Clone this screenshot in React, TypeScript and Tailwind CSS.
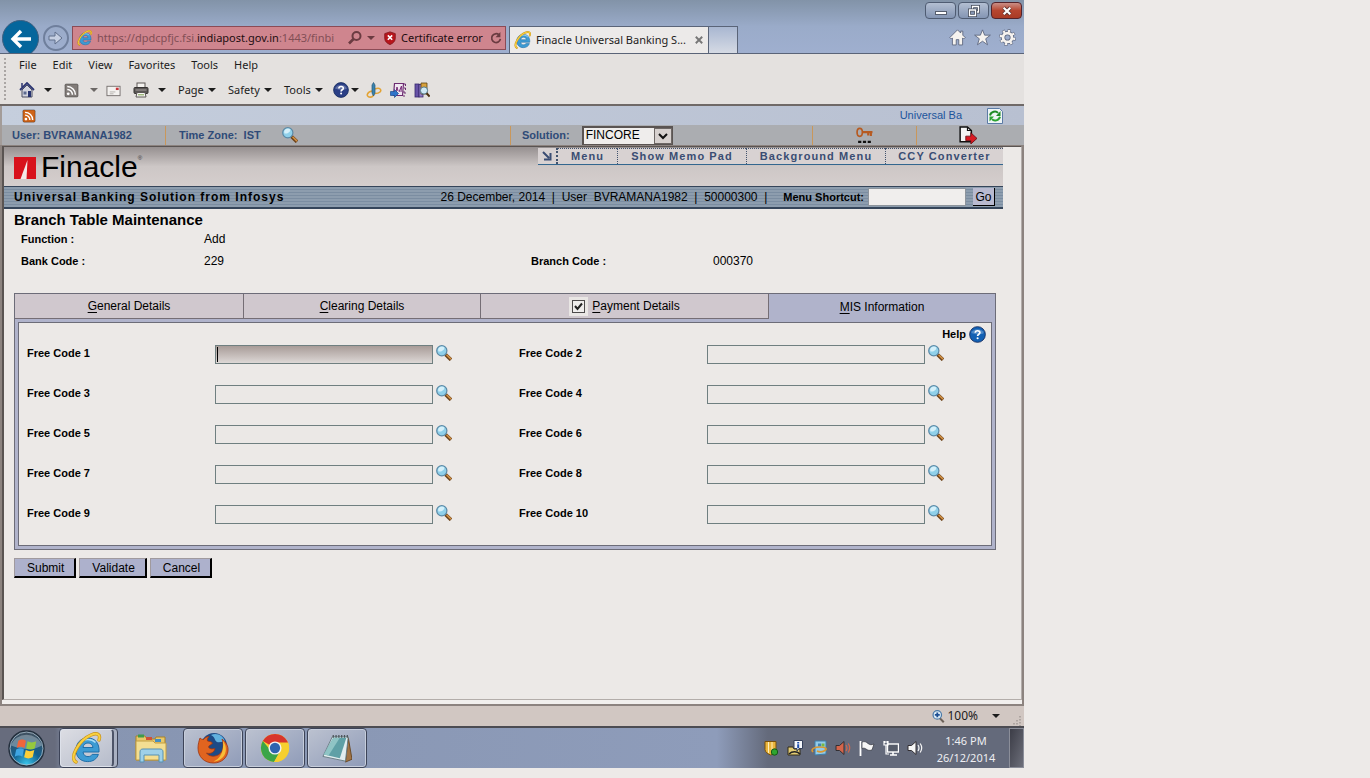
import { useState } from "react";
import type { ReactNode } from "react";

interface IconProps {
  className?: string;
}

const Svg = ({
  className = "",
  box = 16,
  children,
}: IconProps & { box?: number; children: ReactNode }) => (
  <svg
    className={`shrink-0 ${className}`}
    viewBox={`0 0 ${box} ${box}`}
    fill="none"
    aria-hidden="true"
  >
    {children}
  </svg>
);

/* ---------- Browser icons ---------- */

const IeLogo = ({ className }: IconProps) => (
  <Svg className={className} box={32}>
    <path
      d="M28 20H12c.4 3 2.200 4.600 5 4.600 2 0 3.400-.8 4.200-2.200h6.200C25.800 27 22 29.600 16.800 29.600 9.600 29.600 5 25 5 18S9.600 6 16.800 6C24 6 28.600 11 28 20zM22 15.500c-.4-2.800-2.200-4.500-5-4.500s-4.600 1.700-5 4.500z"
      fill="#3d9bd3"
      stroke="#1f6ea8"
      strokeWidth="1"
    />
    <path d="M8 13c2-4 5-5.500 9-5.500 3 0 5.500 1 7.500 3" stroke="#a9dcf5" strokeWidth="1.500" />
    <path
      d="M5 30C-2 26 8 8 20 3c6-2.500 10-1 8 5"
      stroke="#c9921a"
      strokeWidth="3.400"
      strokeLinecap="round"
    />
    <path
      d="M5 30C-2 26 8 8 20 3c6-2.500 10-1 8 5"
      stroke="#f8d03f"
      strokeWidth="2"
      strokeLinecap="round"
    />
  </Svg>
);

const SearchGlyph = ({ className }: IconProps) => (
  <Svg className={className}>
    <circle cx="9.500" cy="6" r="4" stroke="#6b3b41" strokeWidth="2" />
    <path d="M6.500 9L2 13.500" stroke="#6b3b41" strokeWidth="2.600" />
  </Svg>
);

const Shield = ({ className }: IconProps) => (
  <Svg className={className}>
    <path d="M8 1l6 2v5c0 4-2.500 6-6 7.500C4.500 14 2 12 2 8V3z" fill="#b8151b" stroke="#86161b" />
    <path d="M5.500 5l5 5M10.500 5l-5 5" stroke="#fff" strokeWidth="1.800" />
  </Svg>
);

const Refresh = ({ className }: IconProps) => (
  <Svg className={className}>
    <path d="M11.500 4.500A5 5 0 1 0 13 9" stroke="#6b3b41" strokeWidth="2" />
    <path d="M13 1v6H7.500z" fill="#6b3b41" />
  </Svg>
);

const Caret = ({ className = "text-[#1c1c1c]" }: IconProps) => (
  <svg className={`h-1 w-2 shrink-0 ${className}`} viewBox="0 0 8 4" aria-hidden="true">
    <path d="M0 0h8L4 4z" fill="currentColor" />
  </svg>
);

const House = ({ className }: IconProps) => (
  <Svg className={className}>
    <path d="M3 8v7h10V8L8 3z" fill="#d4d6e0" stroke="#4b4f63" />
    <path d="M1 8l7-7 7 7" stroke="#2c3572" strokeWidth="1.800" />
    <path d="M3 1v4" stroke="#2c3572" strokeWidth="1.500" />
    <rect x="9" y="9" width="3" height="6" fill="#27336f" />
    <rect x="4.500" y="9.500" width="3" height="3" fill="#5c6a8f" />
  </Svg>
);

const Rss = ({ className, tone }: IconProps & { tone: string }) => (
  <Svg className={className}>
    <rect x="1" y="1" width="14" height="14" rx="1.500" fill={tone} stroke="#00000055" />
    <circle cx="4.500" cy="11.500" r="1.500" fill="#fff" />
    <path d="M3.500 7a5.500 5.500 0 0 1 5.500 5.500M3.500 3.800A8.700 8.700 0 0 1 12.200 12.500" stroke="#fff" strokeWidth="1.600" />
  </Svg>
);

const Mail = ({ className }: IconProps) => (
  <Svg className={className}>
    <rect x="1" y="3.500" width="14" height="10" fill="#f3f1ef" stroke="#77716f" />
    <rect x="10.500" y="5" width="3" height="2.500" fill="#c8353a" />
    <path d="M4 9.500h6M4 11.500h4" stroke="#b5b1ae" />
  </Svg>
);

const Printer = ({ className }: IconProps) => (
  <Svg className={className}>
    <rect x="4" y="1" width="8" height="6" fill="#f5f3f0" stroke="#5c5856" />
    <rect x="1" y="5.500" width="14" height="6" rx="1" fill="#5a5655" stroke="#373433" />
    <path d="M2.500 8h11" stroke="#a7a2a0" />
    <path d="M4 10.500h8l1 4.500H3z" fill="#f7f6f3" stroke="#5c5856" />
    <path d="M5 12.800h6" stroke="#7aa04c" />
  </Svg>
);

const HelpBall = ({ className, tone }: IconProps & { tone: string }) => (
  <Svg className={className}>
    <circle cx="8" cy="8" r="7.400" fill={tone} stroke="#13295c" strokeWidth=".8" />
    <path d="M2 6.500a6.500 5.500 0 0 1 12 0C11 8.500 6 8 2 6.500z" fill="#fff" opacity=".25" />
    <path d="M5.900 6.400C5.900 3.800 10.300 3.900 10.300 6.200c0 1.600-2.200 1.500-2.200 3.200" stroke="#fff" strokeWidth="1.600" />
    <circle cx="8.100" cy="11.500" r="1" fill="#fff" />
  </Svg>
);

const PenRing = ({ className }: IconProps) => (
  <Svg className={className}>
    <path d="M6 9c-5 1-6 5-3 6 3 .5 5-1 5-4M9 7c5-2 7 1 5 3-1 1-3 1.500-5 1.500" stroke="#e3a334" strokeWidth="1.600" />
    <path d="M6 3l1.500-2.500L9 3v8l-1.500 3L6 11z" fill="#3a83ad" stroke="#265a7c" strokeWidth=".7" />
  </Svg>
);

const NoteClip = ({ className }: IconProps) => (
  <Svg className={className}>
    <path d="M4.500 1.500h9l-1 12h-9z" fill="#f1e8f2" stroke="#6d2c72" strokeWidth="1.200" />
    <path d="M6 10l1-5 1 4M9 10l2.500-6-.5 6" stroke="#762a77" strokeWidth="1" />
    <path d="M14 2h1.500v2M14 6h1.500v2M13 10h2v2M13 14h2" stroke="#6d2c72" />
    <path d="M.5 9.500h4V7.500l4 4-4 4v-2h-4z" fill="#2f74c9" stroke="#1b4a8c" strokeWidth=".7" />
  </Svg>
);

const Research = ({ className }: IconProps) => (
  <Svg className={className}>
    <rect x="1" y="2" width="4" height="13" fill="#6752a6" stroke="#38286d" strokeWidth=".8" />
    <rect x="5" y="2.500" width="4" height="12.500" fill="#8f7ac6" stroke="#38286d" strokeWidth=".8" />
    <path d="M7 1h6v11H7z" fill="#d9a13b" stroke="#5c4414" strokeWidth=".8" />
    <circle cx="10" cy="8.500" r="3.600" fill="#cfe9f5" stroke="#547b8f" />
    <path d="M12.600 11.300l3 3.200" stroke="#4a3212" strokeWidth="2" />
  </Svg>
);

const NavHome = ({ className }: IconProps) => (
  <Svg className={className}>
    <path d="M8 .8L.8 8l1.400 1.400 1-1V15h3.600v-5h2.400v5h3.600V8.400l1 1L15.200 8l-2.200-2.200V2h-2v1.800z" fill="#f6f3ef" stroke="#57617a" strokeWidth=".8" />
  </Svg>
);

const NavStar = ({ className }: IconProps) => (
  <Svg className={className}>
    <path d="M8 .8l2 5h5.400L11 9.200l1.700 5.600L8 11.500l-4.700 3.300L5 9.200.6 5.800H6z" fill="#f6f3ef" stroke="#57617a" strokeWidth=".8" />
  </Svg>
);

const NavGear = ({ className }: IconProps) => (
  <Svg className={className}>
    <circle cx="8" cy="8" r="6.200" stroke="#57617a" strokeWidth="3.400" strokeDasharray="2.600 2.270" />
    <circle cx="8" cy="8" r="4.200" stroke="#57617a" strokeWidth="4" />
    <circle cx="8" cy="8" r="6.200" stroke="#f6f3ef" strokeWidth="2.400" strokeDasharray="2 2.870" strokeDashoffset="-.3" />
    <circle cx="8" cy="8" r="4.200" stroke="#f6f3ef" strokeWidth="2.600" />
  </Svg>
);

/* ---------- Finacle icons ---------- */

const Lens = ({ className }: IconProps) => (
  <Svg className={className}>
    <path d="M9.500 9.500l5.500 5.300" stroke="#6e431b" strokeWidth="3.600" />
    <path d="M10.500 9.800l4.500 4.300" stroke="#d49344" strokeWidth="1.500" />
    <circle cx="5.800" cy="5.800" r="5.100" fill="#8fd0ea" stroke="#5b89a6" strokeWidth="1.200" />
    <path d="M2.500 6.500a3.600 3.600 0 0 1 6-3.800C8 5.500 5 7 2.500 6.500z" fill="#d5f0fa" />
  </Svg>
);

const ReloadPage = ({ className }: IconProps) => (
  <Svg className={className}>
    <path d="M.5.500h12l3 3v12H.5z" fill="#eef4f6" stroke="#5b7ba5" />
    <path d="M3 7.500C4 3.500 9 2.500 11 5" stroke="#1e8b25" strokeWidth="2" />
    <path d="M13.500 3v5H9z" fill="#1e8b25" />
    <path d="M13 8.800c-1 4-6 4.700-8 2.400" stroke="#2ca332" strokeWidth="2" />
    <path d="M2.500 13.500v-5H7z" fill="#2ca332" />
  </Svg>
);

const Key = ({ className }: IconProps) => (
  <Svg className={className}>
    <ellipse cx="3.500" cy="5" rx="2.500" ry="3.800" stroke="#b65a21" strokeWidth="1.600" />
    <path d="M6 4.800h9.500M11.500 5v3M14 5v3.500" stroke="#b65a21" strokeWidth="2" />
    <path d="M2 13h3v2H2zM6.500 13h3v2h-3zM11 13h3v2h-3z" fill="#111" />
  </Svg>
);

const ExitDoor = ({ className }: IconProps) => (
  <Svg className={className}>
    <path d="M1 .8h6.500L11 4v10H1z" fill="#f5f5f5" stroke="#111" strokeWidth="1.300" />
    <path d="M7.500.8V4H11" stroke="#111" />
    <path d="M6 9h4.500V6L16 11l-5.500 5v-3H6z" fill="#d91a23" stroke="#5d0c10" strokeWidth=".7" />
  </Svg>
);

const FinacleMark = ({ className }: IconProps) => (
  <Svg className={className} box={22}>
    <path d="M0 0h22v22H0z" fill="#d8121c" />
    <path d="M6.500 22L13.500 3l-1 19z" fill="#f3e9e8" />
  </Svg>
);

/* ---------- Taskbar icons ---------- */

const StartOrb = ({ className }: IconProps) => (
  <Svg className={className} box={36}>
    <defs>
      <radialGradient id="orb" cx=".5" cy=".95" r=".9">
        <stop offset="0" stopColor="#39c6ec" />
        <stop offset=".45" stopColor="#12608f" />
        <stop offset="1" stopColor="#40505f" />
      </radialGradient>
    </defs>
    <circle cx="18" cy="18" r="17" fill="url(#orb)" stroke="#232f3d" strokeWidth="1.500" />
    <circle cx="18" cy="18" r="16" stroke="#a7bccb" strokeWidth=".8" />
    <path d="M3 15a15.500 14 0 0 1 30 0c-8 5-20 4-30 0z" fill="#fff" opacity=".3" />
    <path d="M10 10.500c3-2 5-1.500 7.500 0L16 17.500c-3-1.500-5-1.500-7.500 0z" fill="#f0653a" />
    <path d="M19 11c3 1.500 5 1.500 8.500 0L26 18c-3 1.500-5.500 1.300-8.300 0z" fill="#95c83e" />
    <path d="M8 19c3-1.600 5-1.500 7.500 0L14 26c-2.500-1.500-4.700-1.500-7.500 0z" fill="#3fa5e2" />
    <path d="M17.300 19.500c3 1.500 5 1.500 8.300 0L24 26.500c-3 1.500-5.500 1.500-8.300 0z" fill="#fbcf38" />
  </Svg>
);

const Explorer = ({ className }: IconProps) => (
  <Svg className={className} box={32}>
    <path d="M1 4h9l2 3h8l1-2h9v23H1z" fill="#e8c86a" stroke="#a8822b" />
    <path d="M3 2.500h6v3H3z" fill="#3f9b4b" />
    <path d="M11 5h6v3h-6z" fill="#cf5037" />
    <path d="M20 7h6v3h-6z" fill="#418ec4" />
    <path d="M1 9h17l2 2h11v17H1z" fill="#f3de92" stroke="#c29d43" />
    <path d="M5 30V20c0-2 1-3 3-3h17c2 0 3 1 3 3v10h-4v-7H9v7z" fill="#9ed0e8" stroke="#5791b3" />
  </Svg>
);

const Firefox = ({ className }: IconProps) => (
  <Svg className={className} box={32}>
    <circle cx="17" cy="14" r="13" fill="#1d4a86" />
    <path d="M14 3c6-3 13 1 14 7-3-1-5 1-8 0-3-2-1-4-6-7z" fill="#62b1df" />
    <path d="M3 6c1 1 2 1.500 3.500 1.500C8 5.500 10 4.500 12 4.500 10.500 6 10 7.500 10.500 9c2 .5 4 .5 5 2-1 2-3.500 2-4 4 1 2.500 4.500 2 6.500 1.500-1 5-6 5.500-8.500 4.500C13 26 22 25 25 19c2-4 1-9 0-12 4 3 6.500 7 6 12-.8 7-6.500 12-14.500 12C7 31 1 24.500 1 16 1 12 2 9 3 6z" fill="#e0641f" stroke="#9d3410" strokeWidth=".8" />
    <path d="M26 9c3 4 4 9 1.500 14-2.500 4-6.500 6.500-11 6.500C23 27 27 20 26 9z" fill="#f8bd37" />
  </Svg>
);

const Chrome = ({ className }: IconProps) => (
  <Svg className={className} box={32}>
    <circle cx="16" cy="16" r="15" fill="#f6cf2f" />
    <path d="M16 16L3 8.500A15 15 0 0 1 29 8.500L30 11H16z" fill="#d8352c" />
    <path d="M3 8.500A15 15 0 0 0 15 31l7-12-6-3-6 1z" fill="#3ba548" />
    <path d="M29.800 10H16v6l5 4-6 11A15 15 0 0 0 29.800 10z" fill="#f6cf2f" />
    <circle cx="16" cy="16" r="7" fill="#f4f4f4" />
    <circle cx="16" cy="16" r="5.500" fill="#2e64b0" />
  </Svg>
);

const Notepad = ({ className }: IconProps) => (
  <Svg className={className} box={32}>
    <path d="M28 5l4 23-7 3z" fill="#a27445" stroke="#684723" />
    <path d="M11 4h17l-3 26L1 25z" fill="#e2edef" stroke="#667b83" />
    <path d="M12 5h14l-7 22L2 23z" fill="#5fa0a6" />
    <path d="M12 5h7L7 24l-5-1z" fill="#8fc4c5" />
    <path d="M12 2v3M15 2v3M18 2v3M21 2v3M24 2v3M27 2v3" stroke="#4c5357" strokeWidth="1.300" />
  </Svg>
);

const TrayShield = ({ className }: IconProps) => (
  <Svg className={className}>
    <path d="M2 1.500h11v8c0 3-3 5-5.500 5.500C5 14 2 12 2 9.500z" fill="#e9b53d" stroke="#79510d" />
    <path d="M5.500 2v11M9 2v8" stroke="#fff0bd" />
    <circle cx="11.500" cy="12" r="3.200" fill="#2fa52f" stroke="#155916" />
  </Svg>
);

const TrayInfo = ({ className }: IconProps) => (
  <Svg className={className}>
    <path d="M1 7h5l1 2h6v6H1z" fill="#e3cb73" stroke="#302a19" />
    <path d="M2 14c3-3 8-3 11 0" stroke="#222" strokeWidth="1.600" />
    <path d="M7 .5h8.500v8H12l-2 2.500V8.500H7z" fill="#f5f7fb" stroke="#34405b" />
    <path d="M11.200 2v1.500M11.200 4.300V8" stroke="#1e4fae" strokeWidth="2" />
  </Svg>
);

const TrayUpdate = ({ className }: IconProps) => (
  <Svg className={className}>
    <path d="M4 1h11v13l-11 1z" fill="#93cbe8" stroke="#3f7fa9" />
    <path d="M7 3.500h3v3H7z" fill="#3f86b8" />
    <path d="M10.500 3.500h3v3h-3z" fill="#78b843" />
    <path d="M2 12C-1 9 4 7 9 7c6 0 8 2 4 4-2 1-5 1-7 0" stroke="#d99832" strokeWidth="1.700" />
  </Svg>
);

const Speaker = ({ className, tone }: IconProps & { tone: string }) => (
  <Svg className={className}>
    <path d="M1 5.500h3.500L9 1.500v13l-4.500-4H1z" fill={tone} stroke="#332f33" />
    <path d="M11 5c1.300 2 1.300 4 0 6M13.200 3.500c2 3 2 6 0 9" stroke={tone} strokeWidth="1.200" />
  </Svg>
);

const Flag = ({ className }: IconProps) => (
  <Svg className={className}>
    <path d="M1.500 1v15" stroke="#fff" strokeWidth="1.800" />
    <path d="M3 2c3-1 4 0 6 1.500 2 1.500 3.500 1.500 6 .5l-2 6c-3 1-4.500 0-6-1C5.500 8 4.500 8 3 8.500z" fill="#f7f7f7" stroke="#31343d" strokeWidth=".7" />
  </Svg>
);

const Network = ({ className }: IconProps) => (
  <Svg className={className}>
    <rect x="4.500" y="4" width="11" height="8" fill="#565c6a" stroke="#fff" strokeWidth="1.400" />
    <path d="M7 15h7M10 12v3" stroke="#fff" strokeWidth="1.600" />
    <path d="M1 1v4h4V1M3 5v9h3M2 1v2M4 1v2" stroke="#fff" strokeWidth="1.200" />
  </Svg>
);

const ZoomIn = ({ className }: IconProps) => (
  <Svg className={className}>
    <path d="M9.500 10l5 5" stroke="#6c6158" strokeWidth="2.600" />
    <circle cx="6.500" cy="6" r="5.200" fill="#dcebf5" stroke="#4a7aa8" strokeWidth="1.500" />
    <path d="M6.500 3v6M3.500 6h6" stroke="#1c4f93" strokeWidth="2.200" />
  </Svg>
);

/* ---------- Sections ---------- */

const menus = ["File", "Edit", "View", "Favorites", "Tools", "Help"];

const TitleBar = () => (
  <header className="flex h-[54px] overflow-hidden border-b border-[#5a6478] bg-linear-to-b from-[#8293a8] via-[#9aabc9] to-[#9fafcf] text-[11px]">
    <div className="flex items-start gap-1 pt-5 pl-0.5">
      <button
        aria-label="Back"
        className="grid size-[37px] shrink-0 place-items-center rounded-full border border-[#3f5f80] bg-[#05669c]"
      >
        <Svg className="size-[22px]" box={22}>
          <path d="M21 11H4M11 3L3 11l8 8" stroke="#fff" strokeWidth="3.400" />
        </Svg>
      </button>
      <button
        aria-label="Forward"
        className="mt-[5px] grid size-[26px] shrink-0 place-items-center rounded-full border-2 border-[#6f7f9c]"
      >
        <Svg className="size-4">
          <path d="M1 6h6V2l7 6-7 6v-4H1z" fill="#c5cfe2" stroke="#61708c" />
        </Svg>
      </button>
    </div>
    <div className="mt-[26px] ml-[3px] flex h-6 w-[434px] items-center border border-[#8b4b56] bg-[#cf858e] pl-1">
      <IeLogo className="size-4" />
      {/* the host name is darker than the rest of the address */}
      <div
        role="textbox"
        aria-label="Address"
        tabIndex={0}
        className="ml-1 w-[246px] whitespace-nowrap text-[#824f56]"
      >
        https://dpdcpfjc.fsi.<span className="text-[#1d0d10]">indiapost.gov.in</span>:1443/finbi
      </div>
      <button aria-label="Search" className="ml-1 flex items-center gap-1">
        <SearchGlyph className="size-4" />
        <Caret className="text-[#6b3b41]" />
      </button>
      <Shield className="ml-2 size-[14px]" />
      <button className="ml-1 whitespace-nowrap text-[#1d0d10]">Certificate error</button>
      <button aria-label="Refresh" className="ml-1.5">
        <Refresh className="size-[14px]" />
      </button>
    </div>
    <div className="mt-[26px] ml-[3px] flex w-[200px] items-center border border-b-0 border-[#5a6478] bg-[#eceae9] pl-1">
      <IeLogo className="size-[18px]" />
      <span className="ml-1 whitespace-nowrap text-[#1c1c1c]">Finacle Universal Banking S...</span>
      <button aria-label="Close tab" className="ml-auto pr-[5px]">
        <Svg className="size-2" box={10}>
          <path d="M1 1l8 8M9 1L1 9" stroke="#777" strokeWidth="2.400" />
        </Svg>
      </button>
    </div>
    <button aria-label="New tab" className="mt-[26px] w-[29px] border border-b-0 border-l-0 border-[#5a6478] bg-linear-to-b from-[#a9b7d1] to-[#d5dae4]" />
    <div className="ml-auto flex flex-col items-end pt-0.5 pr-0.5">
      <div className="flex gap-0.5">
        <button aria-label="Minimize" className="grid h-[17px] w-[31px] place-items-center rounded-sm border border-[#4f5c72] bg-linear-to-b from-[#b3bfd2] to-[#8495b3] pt-1">
          <span className="h-1 w-3 border border-[#555d6d] bg-white" />
        </button>
        <button aria-label="Restore" className="grid h-[17px] w-[31px] place-items-center rounded-sm border border-[#4f5c72] bg-linear-to-b from-[#b3bfd2] to-[#8495b3]">
          <Svg className="size-3" box={12}>
            <path d="M4.500 1.500h6v5.500h-6z" stroke="#454c5c" strokeWidth="3" />
            <path d="M4.500 1.500h6v5.500h-6z" stroke="#fff" strokeWidth="1.300" />
            <path d="M1.500 5h6v5.500h-6z" fill="#8495b3" stroke="#454c5c" strokeWidth="3" />
            <path d="M1.500 5h6v5.500h-6z" stroke="#fff" strokeWidth="1.300" />
          </Svg>
        </button>
        <button aria-label="Close" className="grid h-[17px] w-[31px] place-items-center rounded-sm border border-[#54232a] bg-linear-to-b from-[#c98e86] via-[#b6452f] to-[#a93b25]">
          <Svg className="h-[10px] w-3" box={12}>
            <path d="M2 2l8 8M10 2l-8 8" stroke="#5b3432" strokeWidth="4.400" />
            <path d="M2 2l8 8M10 2l-8 8" stroke="#fff" strokeWidth="2.600" />
          </Svg>
        </button>
      </div>
      <div className="mt-2.5 flex gap-2 pr-1.5">
        <button aria-label="Home">
          <NavHome className="size-[17px]" />
        </button>
        <button aria-label="Favorites">
          <NavStar className="size-[17px]" />
        </button>
        <button aria-label="Settings">
          <NavGear className="size-[17px]" />
        </button>
      </div>
    </div>
  </header>
);

const CommandBar = () => (
  <div className="flex h-[52px] border-b-2 border-[#6f6967] bg-[#e4e1df] pl-1 text-[11px] text-[#1c1c1c]">
    <div className="my-1 w-0.5 border-l-2 border-dotted border-[#aaa6a4]" />
    <div className="pl-[13px]">
      <nav className="flex h-[23px] items-center gap-4">
        {menus.map((name) => (
          <button key={name}>{name}</button>
        ))}
      </nav>
      <div className="flex h-[26px] items-center">
        <button aria-label="Home page" className="flex w-[45px] items-center gap-[9px]">
          <House className="size-4" />
          <Caret />
        </button>
        <button aria-label="Feeds" className="flex w-[42px] items-center gap-[11px]">
          <Rss className="size-[15px]" tone="#827c79" />
          <Caret className="text-[#6c6866]" />
        </button>
        <button aria-label="Read mail" className="w-[27px]">
          <Mail className="size-[15px]" />
        </button>
        <button aria-label="Print" className="flex w-[45px] items-center gap-[9px]">
          <Printer className="size-4" />
          <Caret />
        </button>
        <button className="flex w-[50px] items-center gap-1">
          Page <Caret />
        </button>
        <button className="flex w-14 items-center gap-1">
          Safety <Caret />
        </button>
        <button className="flex w-[49px] items-center gap-1">
          Tools <Caret />
        </button>
        <button aria-label="Help" className="flex w-[33px] items-center gap-0.5">
          <HelpBall className="size-4" tone="#2b3f86" />
          <Caret />
        </button>
        <div className="flex gap-2">
          <button aria-label="Edit page">
            <PenRing className="size-4" />
          </button>
          <button aria-label="Send to notes">
            <NoteClip className="size-4" />
          </button>
          <button aria-label="Research">
            <Research className="size-4" />
          </button>
        </div>
      </div>
    </div>
  </div>
);

const SessionBar = () => (
  <div className="border-l-2 border-[#a39c99] font-['Liberation_Sans',Arial,sans-serif] text-[11px] text-[#2f4b78]">
    <div className="flex h-[19px] items-center justify-between bg-linear-to-r from-[#c5cedd] to-[#b8c0d1] pr-[21px] pl-5">
      <Rss className="size-[14px]" tone="#cf6419" />
      <div className="flex items-center gap-[25px] text-[#1c549c]">
        <span>Universal Ba</span>
        <button aria-label="Reload">
          <ReloadPage className="size-4" />
        </button>
      </div>
    </div>
    <div className="flex h-5 items-center bg-[#abadb1] font-bold">
      <div className="w-[163px] pl-2.5">User: BVRAMANA1982</div>
      <div className="flex h-[19px] w-[345px] items-center border-l border-[#c9975b] pl-[13px]">
        <span className="whitespace-pre">Time Zone:  IST</span>
        <button aria-label="Change time zone" className="ml-[21px]">
          <Lens className="size-4" />
        </button>
      </div>
      <div className="flex h-[19px] w-[302px] items-center border-l border-[#c9975b] pl-[11px]">
        <label htmlFor="solution">Solution:</label>
        <div className="relative ml-3">
          <select
            id="solution"
            className="block h-[19px] w-[91px] appearance-none border-2 border-r-1 border-b-1 border-[#5a5452] bg-[#efedec] pl-0.5 text-[12px] leading-[15px] font-normal text-black"
          >
            <option>FINCORE</option>
          </select>
          <span className="pointer-events-none absolute top-0.5 right-px grid h-4 w-[18px] place-items-center border border-[#6d6765] bg-[#d7d1cf]">
            <Svg className="size-3" box={12}>
              <path d="M2 4l4 4 4-4" stroke="#111" strokeWidth="2" />
            </Svg>
          </span>
        </div>
      </div>
      <div className="flex h-[19px] w-[104px] items-center justify-center border-l border-[#c9975b]">
        <button aria-label="Change password">
          <Key className="size-[17px]" />
        </button>
      </div>
      <div className="flex h-[19px] flex-1 items-center border-l border-[#c9975b] pl-[42px]">
        <button aria-label="Log out">
          <ExitDoor className="size-[18px]" />
        </button>
      </div>
    </div>
  </div>
);

const Banner = () => (
  <div className="mr-[18px]">
    <div className="flex h-[39px] justify-between bg-linear-to-b from-[#969090] via-[#cdc7c6] to-[#d5cecd]">
      <div className="flex items-center pl-2.5">
        <FinacleMark className="mt-0.5 size-[22px]" />
        <span className="ml-[5px] text-[30px] leading-[36px] text-black">Finacle</span>
        <span className="mb-4 text-[6px] text-[#333]">®</span>
      </div>
      <nav className="mt-px flex h-[17px] items-center border-b border-[#33678f] bg-[#d8d2d2] text-[11px] font-bold tracking-widest text-[#3a4d73]">
        <button aria-label="Collapse" className="grid h-4 w-[18px] place-items-center">
          <Svg className="size-3" box={12}>
            <path d="M2 2l6 6M9.500 3v6.500H3" stroke="#3a4d73" strokeWidth="2" />
          </Svg>
        </button>
        <a href="#menu" className="w-[61px] border-t border-l-2 border-dotted border-[#42536d] text-center leading-[15px]">
          Menu
        </a>
        <a href="#memo" className="w-[129px] border-t border-l border-dotted border-[#42536d] text-center leading-[15px]">
          Show Memo Pad
        </a>
        <a href="#background" className="w-[139px] border-t border-l border-dotted border-[#42536d] text-center leading-[15px]">
          Background Menu
        </a>
        <a href="#converter" className="w-[118px] border-t border-l border-dotted border-[#42536d] text-center leading-[15px]">
          CCY Converter
        </a>
      </nav>
    </div>
    <div className="flex h-[23px] items-center border-t border-b-2 border-[#35455a] bg-[repeating-linear-gradient(#8d9dae_0_2px,#7b8da1_2px_3px)] pr-2 pl-2.5 text-[12px] text-black">
      <span className="font-bold tracking-[1px]">Universal Banking Solution from Infosys</span>
      <div className="ml-auto flex items-center">
        <span className="whitespace-pre">26 December, 2014  |  User  BVRAMANA1982  |  50000300  |</span>
        <label htmlFor="shortcut" className="ml-4 text-[11px] font-bold">
          Menu Shortcut:
        </label>
        <input id="shortcut" className="ml-1 h-[18px] w-[98px] border border-[#8d949c] bg-[#f0eeed] px-1" />
        <button className="ml-[7px] h-[18px] w-[22px] border-r border-b border-black bg-[#b9bad0] leading-4">Go</button>
      </div>
    </div>
  </div>
);

const tabs = ["General Details", "Clearing Details", "Payment Details", "MIS Information"];

const Tabs = () => {
  const [active, setActive] = useState(3);
  const [payment, setPayment] = useState(true);

  return (
    <div className="grid grid-cols-[229fr_237fr_288fr_226fr] text-[12px]">
      {tabs.map((name, index) => (
        <div
          key={name}
          className={`flex h-[25px] items-center justify-center gap-1 ${
            active === index
              ? "bg-[#b0b3cb]"
              : "border-r border-b border-[#756e75] bg-[#d0c8ce]"
          }`}
        >
          {index === 2 && (
            <span className="grid size-[19px] place-items-center bg-[#e9e6e4]">
              <input
                type="checkbox"
                aria-label="Payment Details enabled"
                checked={payment}
                onChange={() => setPayment(!payment)}
                className="col-start-1 row-start-1 size-[13px] appearance-none border border-[#4c4a4a] bg-[#efedec]"
              />
              {payment && (
                <Svg className="pointer-events-none col-start-1 row-start-1 size-[11px]" box={11}>
                  <path d="M2 5l2.500 3L9 2.500" stroke="#222" strokeWidth="2" />
                </Svg>
              )}
            </span>
          )}
          <button onClick={() => setActive(index)}>
            <span className="underline underline-offset-2">{name[0]}</span>
            {name.slice(1)}
          </button>
        </div>
      ))}
    </div>
  );
};

const FreeCode = ({ number }: { number: number }) => (
  <div className="flex h-10 items-start">
    <label htmlFor={`code-${number}`} className="w-[188px] text-[11px] leading-4 font-bold">
      Free Code {number}
    </label>
    <div className="relative">
      <input
        id={`code-${number}`}
        className={`block h-[19px] w-[218px] border border-[#6f7f80] px-1 text-[12px] ${
          number === 1 ? "bg-linear-to-b from-[#a89c98] to-[#ddd8d6]" : "bg-[#ebe8e6]"
        }`}
      />
      {number === 1 && <span className="absolute top-0.5 left-0.5 h-[15px] w-px bg-black" />}
    </div>
    <button aria-label={`Look up Free Code ${number}`} className="ml-[3px]">
      <Lens className="size-4" />
    </button>
  </div>
);

const BranchForm = () => (
  <main className="px-2.5 pb-[121px] text-black">
    <h1 className="pt-0.5 text-[15px] leading-[17px] font-bold">Branch Table Maintenance</h1>
    <dl className="grid grid-cols-[183px_327px_182px_1fr] pl-[7px] text-[12px] leading-[22px]">
      <dt className="text-[11px] font-bold">Function :</dt>
      <dd className="col-span-3">Add</dd>
      <dt className="text-[11px] font-bold">Bank Code :</dt>
      <dd>229</dd>
      <dt className="text-[11px] font-bold">Branch Code :</dt>
      <dd>000370</dd>
    </dl>
    <div className="mt-[21px] mr-[15px] border border-[#6c6c78] bg-[#b0b3cb]">
      <Tabs />
      <div className="m-[3px] border border-[#6c6c78] bg-[#ece9e7]">
        <div className="flex h-[22px] items-center justify-end pr-[5px] text-[11px]">
          <a href="#help" className="flex items-center gap-[3px] font-bold">
            Help
            <HelpBall className="size-[17px]" tone="#1260b4" />
          </a>
        </div>
        <div className="grid grid-cols-2 gap-x-5 pl-2">
          {Array.from({ length: 10 }, (_, i) => (
            <FreeCode key={i} number={i + 1} />
          ))}
        </div>
      </div>
    </div>
    <div className="mt-2 flex gap-[3px] text-[12px]">
      {["Submit", "Validate", "Cancel"].map((name) => (
        <button
          key={name}
          className="h-5 border border-r-2 border-b-2 border-[#a09a9e] border-r-black border-b-black bg-[#adb1cc] pr-[10px] pl-3 leading-4"
        >
          {name}
        </button>
      ))}
    </div>
  </main>
);

const StatusBar = () => (
  <div className="flex h-[22px] items-center justify-end border-b-2 border-[#4c4c52] bg-[#d1c7c2] pr-0.5 text-[12px] text-[#1c1c1c]">
    <button className="flex items-center gap-0.5">
      <ZoomIn className="size-[13px]" />
      100%
      <Caret className="ml-3 text-[#1c1c1c]" />
    </button>
    <Svg className="ml-3 size-[10px] self-end" box={10}>
      <path d="M8 0v10M5 4v6M2 7v3" stroke="#a39a96" strokeWidth="1.500" strokeDasharray="1.500 1.500" />
    </Svg>
  </div>
);

const pinned = [
  { name: "Firefox", icon: <Firefox className="size-8" /> },
  { name: "Chrome", icon: <Chrome className="size-[30px]" /> },
  { name: "Notepad", icon: <Notepad className="size-[30px]" /> },
];

const Taskbar = () => (
  <footer className="flex h-10 items-center bg-[linear-gradient(90deg,#676c7d_0_55px,#8795b1_70px,#8e9cba_70%,#646a7b_75%)]">
    <button aria-label="Start" className="mr-[14px] ml-2">
      <StartOrb className="size-[37px]" />
    </button>
    <div className="flex h-10 w-[59px] rounded-sm border border-[#3d4458] bg-[#a9b0c1]">
      <button aria-label="Internet Explorer" className="grid w-[54px] place-items-center rounded-sm border border-r-2 border-[#dde1ea] border-r-[#4d5468] bg-linear-to-br from-[#dcdde3] to-[#b6bccb]">
        <IeLogo className="size-8" />
      </button>
    </div>
    <button aria-label="Windows Explorer" className="grid w-[65px] place-items-center">
      <Explorer className="size-8" />
    </button>
    <div className="flex gap-0.5">
      {pinned.map((app) => (
        <button
          key={app.name}
          aria-label={app.name}
          className="grid h-10 w-[60px] place-items-center rounded-sm border border-[#3d4458] bg-linear-to-br from-[#bcc2d0] to-[#8f9bb8] inset-ring inset-ring-[#c6cddb]"
        >
          {app.icon}
        </button>
      ))}
    </div>
    <div className="ml-auto flex items-center gap-2">
      <TrayShield className="size-4" />
      <TrayInfo className="size-4" />
      <TrayUpdate className="size-4" />
      <Speaker className="size-4" tone="#d4654b" />
      <Flag className="size-4" />
      <Network className="size-4" />
      <Speaker className="size-4" tone="#f7f7f7" />
    </div>
    <div className="w-[86px] pt-0.5 text-center text-[11px] leading-[17px] text-[#eeeef2]">
      <div>1:46 PM</div>
      <div>26/12/2014</div>
    </div>
    <button aria-label="Show desktop" className="h-10 w-[15px] border border-[#8b8e99] bg-linear-to-br from-[#3c3d47] to-[#6d6f7a]" />
  </footer>
);

export default function App() {
  return (
    <div className="min-h-screen bg-[#edeae8] font-['Noto_Sans','Segoe_UI',sans-serif]">
      <div className="w-full max-w-[1024px]">
        <TitleBar />
        <CommandBar />
        <SessionBar />
        <div className="border-2 border-t-1 border-[#8c837f] bg-[#f1efed] pb-1 font-['Liberation_Sans',Arial,sans-serif]">
          <div className="border-y border-l-2 border-r border-[#b3adaa] border-t-[#5a5452] border-l-[#5a5452] bg-[#ece9e7]">
            <Banner />
            <BranchForm />
          </div>
        </div>
        <StatusBar />
        <Taskbar />
      </div>
    </div>
  );
}
